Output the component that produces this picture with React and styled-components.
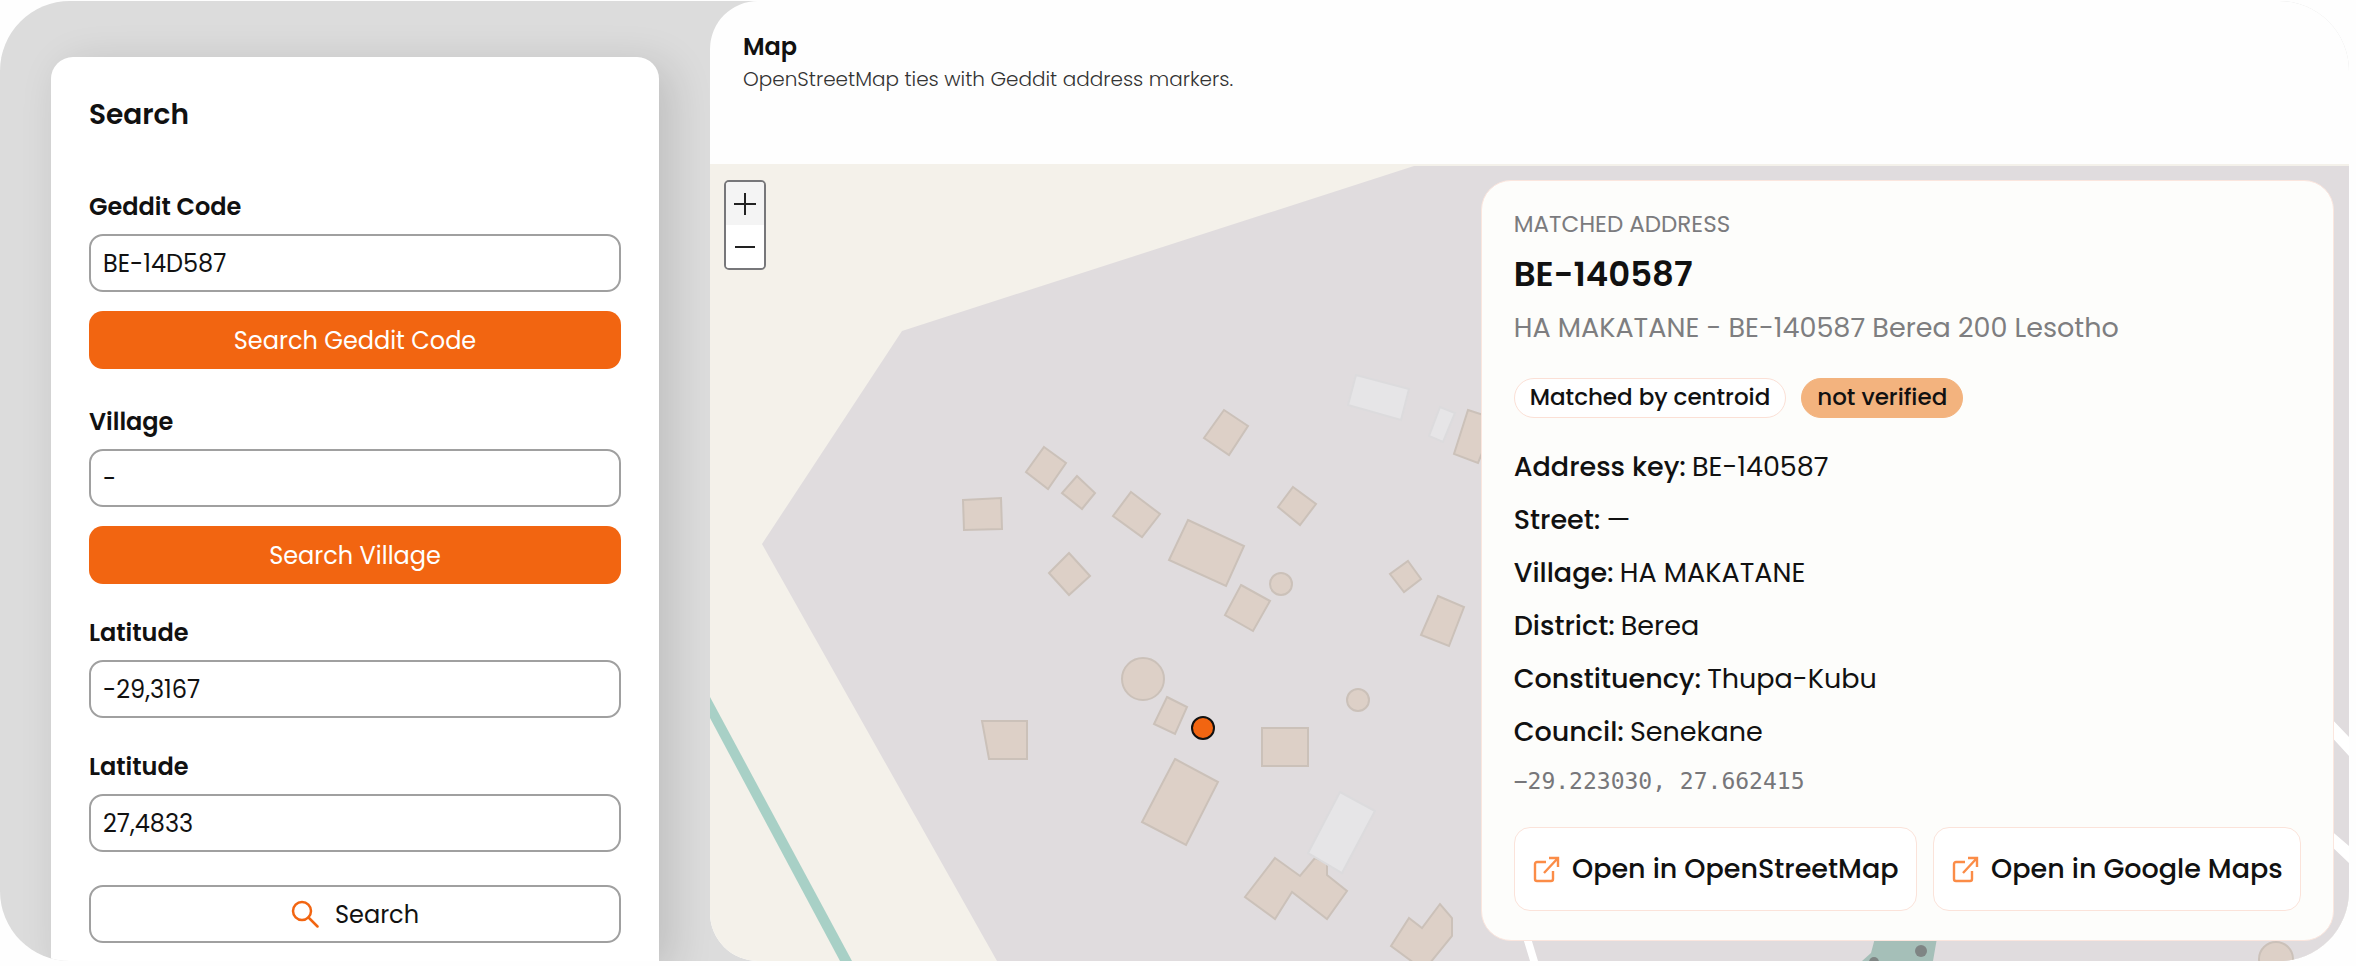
import styled, { createGlobalStyle } from "styled-components";

const App = () => {
  return (
    <>
      <GlobalStyle />
      <Frame>
        <Sidebar>
          <SearchCard>
            <CardTitle>Search</CardTitle>
            <Field>
              <Label htmlFor="code">Geddit Code</Label>
              <Input id="code" defaultValue="BE-14D587" />
              <PrimaryButton type="button">Search Geddit Code</PrimaryButton>
            </Field>
            <Field>
              <Label htmlFor="village">Village</Label>
              <Input id="village" defaultValue="-" />
              <PrimaryButton type="button">Search Village</PrimaryButton>
            </Field>
            <Field>
              <Label htmlFor="lat">Latitude</Label>
              <Input id="lat" defaultValue="-29,3167" />
            </Field>
            <Field>
              <Label htmlFor="lng">Latitude</Label>
              <Input id="lng" defaultValue="27,4833" />
            </Field>
            <OutlineButton type="button">
              <SearchIcon />
              Search
            </OutlineButton>
          </SearchCard>
        </Sidebar>
        <MapPanel>
          <MapHeader>
            <h2>Map</h2>
            <p>OpenStreetMap ties with Geddit address markers.</p>
          </MapHeader>
          <MapArea>
            <MapDrawing />
            <ZoomControl>
              <ZoomButton type="button" aria-label="Zoom in" $active>
                <svg width="24" height="24" viewBox="0 0 24 24">
                  <path d="M12 1v22M1 12h22" />
                </svg>
              </ZoomButton>
              <ZoomButton type="button" aria-label="Zoom out">
                <svg width="24" height="24" viewBox="0 0 24 24">
                  <path d="M2 12h20" />
                </svg>
              </ZoomButton>
            </ZoomControl>
            <DetailCard>
              <Eyebrow>MATCHED ADDRESS</Eyebrow>
              <Code>BE-140587</Code>
              <Address>HA MAKATANE - BE-140587 Berea 200 Lesotho</Address>
              <Badges>
                <Badge>Matched by centroid</Badge>
                <Badge $warn>not verified</Badge>
              </Badges>
              <Details>
                {details.map(([name, value]) => (
                  <DetailRow key={name}>
                    <dt>{name}:</dt>
                    <dd>{value}</dd>
                  </DetailRow>
                ))}
              </Details>
              <Coords>−29.223030, 27.662415</Coords>
              <Links>
                <LinkButton href="#osm">
                  <ExternalIcon />
                  Open in OpenStreetMap
                </LinkButton>
                <LinkButton href="#google">
                  <ExternalIcon />
                  Open in Google Maps
                </LinkButton>
              </Links>
            </DetailCard>
          </MapArea>
        </MapPanel>
      </Frame>
    </>
  );
};

export default App;

const details = [
  ["Address key", "BE-140587"],
  ["Street", "—"],
  ["Village", "HA MAKATANE"],
  ["District", "Berea"],
  ["Constituency", "Thupa-Kubu"],
  ["Council", "Senekane"],
];

const buildings = [
  "963,500 1001,498 1002,529 964,530",
  "1044,447 1066,463 1048,489 1026,472",
  "1077,476 1095,493 1082,509 1062,493",
  "1131,492 1160,514 1142,537 1113,516",
  "1188,520 1244,546 1226,586 1169,560",
  "1241,585 1270,601 1253,631 1225,615",
  "1069,553 1090,576 1069,595 1049,573",
  "1293,487 1316,504 1300,525 1278,507",
  "1408,561 1421,579 1404,592 1390,574",
  "1438,596 1464,607 1449,646 1421,635",
  "1224,410 1248,426 1229,455 1204,438",
  "1468,410 1496,419 1478,463 1454,454",
  "1167,697 1187,707 1175,734 1154,724",
  "982,721 1027,721 1027,759 989,759",
  "1262,728 1308,728 1308,766 1262,766",
  "1175,759 1218,782 1186,845 1142,822",
  "1275,858 1300,876 1315,858 1327,863 1327,875 1347,891 1327,919 1292,892 1275,919 1245,897",
  "1409,918 1422,928 1440,904 1452,918 1452,936 1430,963 1414,963 1391,946",
];

const sheds = [
  "1356,375 1409,389 1401,420 1348,405",
  "1440,407 1455,413 1443,442 1429,436",
  "1340,792 1375,811 1342,873 1308,853",
];

const huts = [
  [1281, 584, 11],
  [1143, 679, 21],
  [1358, 700, 11],
  [2276, 959, 17],
];

const MapDrawing = () => (
  <MapSvg viewBox="710 164 1639 797" preserveAspectRatio="xMinYMin slice">
    <path fill="#e0dcde" d="M1414 166L902 331L762 544L997 961H2349V166z" />
    <path fill="#a8d0c6" d="M710 697L852 961H840L710 718z" />
    <path
      fill="#fff"
      d="M1523 938h8l7 23h-8zM2328 715L2349 737v19L2328 733zM2328 828L2349 846v17L2328 843z"
    />
    <path fill="#a5bfb8" d="M1875 938h62l-4 23h-71l9-8z" />
    <g fill="#7f8584">
      <circle cx="1921" cy="951" r="6" />
      <circle cx="1874" cy="962" r="5" />
    </g>
    <g fill="#ddd0c7" stroke="#cbc1b9" strokeWidth="2">
      {buildings.map((points) => (
        <polygon key={points} points={points} />
      ))}
      {huts.map(([cx, cy, r]) => (
        <circle key={cx} cx={cx} cy={cy} r={r} />
      ))}
    </g>
    <g fill="#e6e5e7" stroke="#dcdbdd" strokeWidth="2">
      {sheds.map((points) => (
        <polygon key={points} points={points} />
      ))}
    </g>
    <circle cx="1203" cy="728" r="11" fill="#f26511" stroke="#111" strokeWidth="2" />
  </MapSvg>
);

const SearchIcon = () => (
  <svg width="28" height="28" viewBox="0 0 28 28" fill="none" stroke="#f26511" strokeWidth="2.5">
    <circle cx="11" cy="11" r="9" />
    <path d="M17.5 17.5l9 9" strokeLinecap="round" />
  </svg>
);

const ExternalIcon = () => (
  <svg
    width="28"
    height="28"
    viewBox="0 0 28 28"
    fill="none"
    stroke="#fb8c47"
    strokeWidth="2.4"
  >
    <path d="M14 7H5a2 2 0 0 0-2 2v15a2 2 0 0 0 2 2h14a2 2 0 0 0 2-2v-8" />
    <path d="M17 3h9v9M26 3L12 18" />
  </svg>
);

const GlobalStyle = createGlobalStyle`
  * {
    box-sizing: border-box;
  }

  body {
    margin: 0;
    background-color: #fefefe;
    color: #111;
    font-family: Poppins, Inter, sans-serif;
  }

  h1, h2, p, dl, dd {
    margin: 0;
  }

  button, input {
    font-family: inherit;
    color: inherit;
  }
`;

const Frame = styled.main`
  display: flex;
  height: calc(100vh - 6px);
  margin: 1px 7px 5px 0;
  overflow: hidden;
  border-radius: 70px;
  background-color: #dcdcdc;
`;

const Sidebar = styled.aside`
  flex: 0 0 710px;
  padding: 56px 51px 0;
`;

const SearchCard = styled.form`
  display: flex;
  flex-direction: column;
  gap: 30px;
  min-height: 100%;
  padding: 38px 38px 20px;
  border-radius: 22px 22px 0 0;
  background-color: #fff;
  box-shadow: 12px 8px 44px rgba(0, 0, 0, 0.14);
`;

const CardTitle = styled.h1`
  margin-bottom: 23px;
  font-size: 28px;
  font-weight: 600;
  line-height: 40px;
`;

const Field = styled.div`
  display: flex;
  flex-direction: column;

  &:first-of-type {
    margin-bottom: 4px;
  }
`;

const Label = styled.label`
  margin-bottom: 8px;
  font-size: 24px;
  font-weight: 600;
  line-height: 38px;
`;

const Input = styled.input`
  width: 100%;
  height: 58px;
  padding: 0 12px;
  border: 2px solid #a0a0a0;
  border-radius: 14px;
  background-color: #fff;
  font-size: 24px;
`;

const PrimaryButton = styled.button`
  height: 58px;
  margin-top: 19px;
  border: none;
  border-radius: 14px;
  background-color: #f26511;
  color: #fff;
  font-size: 24px;
  cursor: pointer;
`;

const OutlineButton = styled.button`
  display: flex;
  align-items: center;
  justify-content: center;
  gap: 16px;
  height: 58px;
  margin-top: 3px;
  border: 2px solid #a0a0a0;
  border-radius: 14px;
  background-color: #fff;
  font-size: 24px;
  cursor: pointer;
`;

const MapPanel = styled.section`
  flex: 1;
  display: flex;
  flex-direction: column;
  min-width: 0;
  overflow: hidden;
  border-radius: 48px 0 0 48px;
  background-color: #fefefe;
`;

const MapHeader = styled.header`
  height: 163px;
  padding: 29px 33px;

  h2 {
    font-size: 24px;
    font-weight: 600;
    line-height: 34px;
  }

  p {
    color: #333;
    font-size: 20px;
    font-weight: 300;
    line-height: 30px;
  }
`;

const MapArea = styled.div`
  position: relative;
  flex: 1;
  display: flex;
  align-items: flex-start;
  justify-content: space-between;
  padding: 16px 15px 20px 14px;
  background-color: #f4f1ea;
`;

const MapSvg = styled.svg`
  position: absolute;
  inset: 0;
  width: 100%;
  height: 100%;
`;

const ZoomControl = styled.div`
  position: relative;
  width: 42px;
  border: 2px solid #77777a;
  border-radius: 5px;
  overflow: hidden;
`;

const ZoomButton = styled.button`
  display: flex;
  align-items: center;
  justify-content: center;
  width: 100%;
  height: 43px;
  padding: 0;
  border: none;
  background-color: ${(props) => (props.$active ? "#f4f4f4" : "#fff")};
  cursor: pointer;

  path {
    stroke: #222;
    stroke-width: 2;
  }
`;

const DetailCard = styled.article`
  position: relative;
  width: 53%;
  height: 100%;
  padding: 26px 32px 28px;
  border: 1px solid #fbe6de;
  border-radius: 30px;
  background-color: #fdfdfb;
`;

const Eyebrow = styled.p`
  color: #7b7b7e;
  font-size: 23px;
  line-height: 34px;
`;

const Code = styled.h2`
  margin-top: 8px;
  font-size: 34px;
  font-weight: 600;
  line-height: 50px;
`;

const Address = styled.p`
  margin-top: 10px;
  color: #7e7e80;
  font-size: 27px;
  line-height: 38px;
`;

const Badges = styled.div`
  display: flex;
  gap: 15px;
  margin-top: 31px;
`;

const Badge = styled.span`
  height: 40px;
  padding: 0 15px;
  border: 1px solid ${(props) => (props.$warn ? "#f3b37e" : "#fbe0d6")};
  border-radius: 20px;
  background-color: ${(props) => (props.$warn ? "#f3b37e" : "#fff")};
  font-size: 23px;
  font-weight: 500;
  line-height: 36px;
`;

const Details = styled.dl`
  margin-top: 22px;
`;

const DetailRow = styled.div`
  display: flex;
  gap: 6px;
  font-size: 27px;
  line-height: 53px;

  dt {
    font-weight: 500;
  }
`;

const Coords = styled.p`
  margin-top: 5px;
  color: #77777a;
  font-family: "DejaVu Sans Mono", monospace;
  font-size: 23px;
  line-height: 36px;
`;

const Links = styled.div`
  display: flex;
  gap: 16px;
  margin-top: 28px;
`;

const LinkButton = styled.a`
  flex: 1 1 auto;
  display: flex;
  align-items: center;
  justify-content: center;
  gap: 12px;
  height: 84px;
  border: 1px solid #fbe3da;
  border-radius: 16px;
  background-color: #fff;
  color: #111;
  font-size: 27px;
  font-weight: 500;
  text-decoration: none;
  white-space: nowrap;
`;
